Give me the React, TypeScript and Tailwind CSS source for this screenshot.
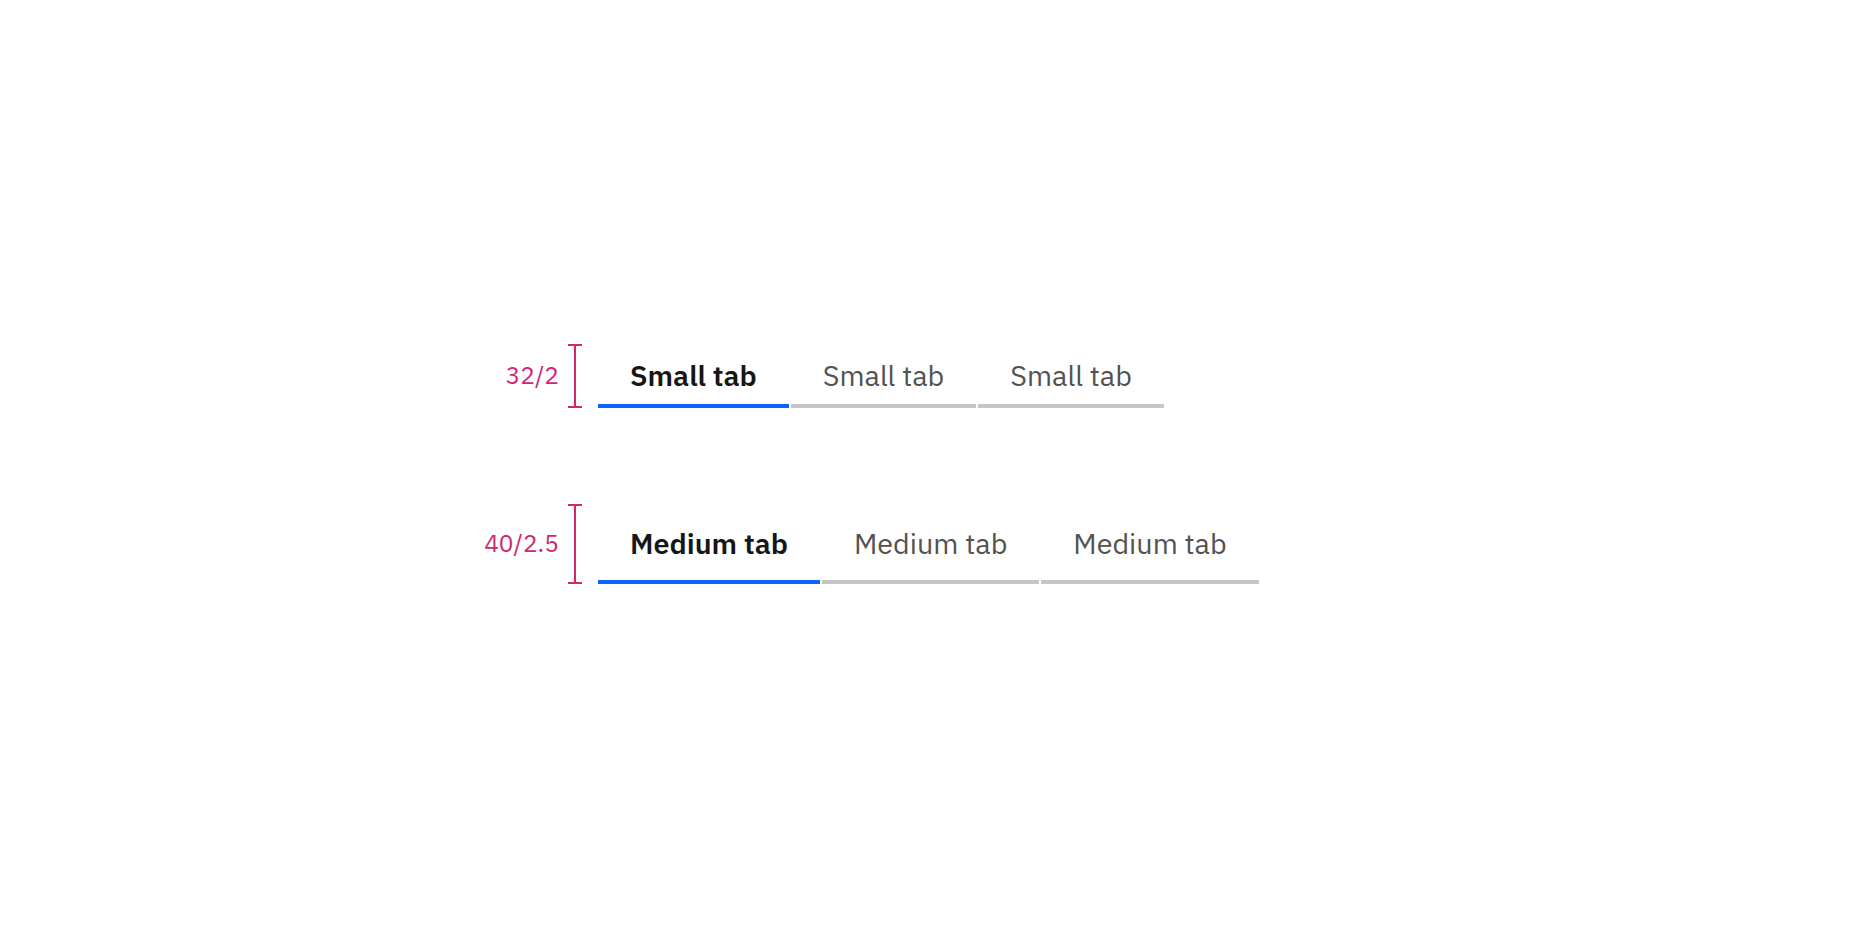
import React from "react";

type RowProps = {
  label: string;
  heightClass: string;
  tabs: string[];
};

function Bracket() {
  return (
    <div className="ml-[9px] flex w-[14px] flex-col items-center">
      <div className="h-[2px] w-full bg-[#d12771]" />
      <div className="w-[2px] flex-1 bg-[#d12771]" />
      <div className="h-[2px] w-full bg-[#d12771]" />
    </div>
  );
}

function SpecRow({ label, heightClass, tabs }: RowProps) {
  return (
    <div className={`flex items-stretch ${heightClass}`}>
      <div className="flex w-[89px] items-center justify-end pb-[2px] text-[24.5px] leading-none text-[#d12771]">
        {label}
      </div>
      <Bracket />
      <div className="ml-[16px] flex gap-[2px]">
        {tabs.map((t, i) => (
          <div
            key={i}
            className={
              i === 0
                ? "flex items-center border-b-4 border-[#0f62fe] px-8 pt-[4px] text-[28.75px] font-semibold leading-none text-[#161616]"
                : "flex items-center border-b-4 border-[#c6c6c6] px-8 pt-[4px] text-[28.75px] font-normal leading-none text-[#525252]"
            }
          >
            {t}
          </div>
        ))}
      </div>
    </div>
  );
}

export default function App() {
  return (
    <div
      className="min-h-[928px] w-full bg-white pl-[470px] pt-[344px]"
      style={{ fontFamily: "'IBM Plex Sans', Roboto, 'Liberation Sans', sans-serif" }}
    >
      <div className="flex flex-col gap-[96px]">
        <SpecRow
          label="32/2"
          heightClass="h-[64px]"
          tabs={["Small tab", "Small tab", "Small tab"]}
        />
        <SpecRow
          label="40/2.5"
          heightClass="h-[80px]"
          tabs={["Medium tab", "Medium tab", "Medium tab"]}
        />
      </div>
    </div>
  );
}
